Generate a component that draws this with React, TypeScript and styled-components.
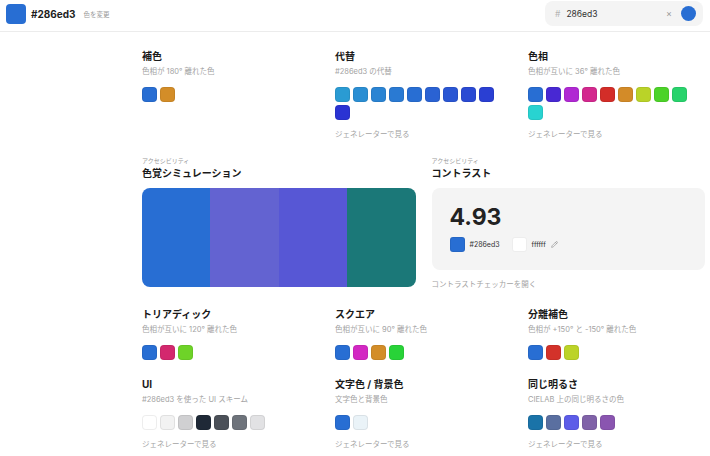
import styled, { createGlobalStyle } from 'styled-components';
import { Pencil } from 'lucide-react';

const GlobalStyle = createGlobalStyle`
    body {
        margin: 0;
        background: #ffffff;
        font-family: Inter, "Noto Sans CJK JP", sans-serif;
        color: #1a1a1a;
    }
`;

const Header = styled.header`
    height: 32px;
    box-sizing: border-box;
    border-bottom: 1px solid #ececec;
    display: flex;
    align-items: center;
    justify-content: space-between;
    padding: 0 7px 0 6px;
    .brand {
        display: flex;
        align-items: center;
        gap: 5px;
        margin-top: -4px;
    }
    .logo {
        width: 20px;
        height: 20px;
        border-radius: 4px;
        background: #286ed3;
    }
    .hex {
        font-size: 10px;
        font-weight: 700;
        color: #1d1d1d;
    }
    .change {
        font-size: 6.5px;
        color: #9a9a9a;
        margin-left: 3px;
    }
`;

const Search = styled.div`
    width: 158px;
    height: 25px;
    box-sizing: border-box;
    border-radius: 8px;
    background: #f4f4f4;
    display: flex;
    align-items: center;
    padding: 0 7px 0 10px;
    margin-top: -4px;
    font-size: 8.5px;
    .hash {
        color: #b5b5b5;
        margin-right: 6px;
    }
    .value {
        color: #333;
        flex: 1;
    }
    .clear {
        color: #9a9a9a;
        font-size: 9px;
        margin-right: 9px;
    }
    .dot {
        width: 15px;
        height: 15px;
        border-radius: 50%;
        background: #286ed3;
    }
`;

const Content = styled.main`
    width: 563px;
    margin-left: 142px;
    padding-top: 17px;
    display: grid;
    grid-template-columns: repeat(6, 1fr);
    column-gap: 16px;
    row-gap: 17px;
`;

const Section = styled.section<{ $span: number }>`
    grid-column: span ${(p) => p.$span};
    min-width: 0;
`;

const Label = styled.div`
    font-size: 6px;
    line-height: 8px;
    color: #9a9a9a;
    margin-bottom: 1px;
`;

const Title = styled.h3`
    margin: 0;
    font-size: 10px;
    line-height: 14px;
    font-weight: 700;
    color: #1a1a1a;
`;

const Sub = styled.p`
    margin: 4px 0 0;
    font-size: 7.5px;
    line-height: 10px;
    color: #a3a3a3;
`;

const Swatches = styled.div`
    margin-top: 10px;
    display: flex;
    flex-wrap: wrap;
    gap: 3px;
    max-width: 170px;
`;

const Swatch = styled.div<{ $c: string }>`
    width: 15px;
    height: 15px;
    border-radius: 4px;
    background: ${(p) => p.$c};
    box-shadow: inset 0 0 0 1px rgba(0, 0, 0, 0.07);
`;

const LinkText = styled.a`
    display: block;
    margin-top: 10px;
    font-size: 7.5px;
    line-height: 10px;
    color: #a3a3a3;
`;

const SimBar = styled.div`
    margin-top: 8px;
    height: 99px;
    border-radius: 8px;
    overflow: hidden;
    display: flex;
    div {
        flex: 1;
    }
`;

const ContrastBox = styled.div`
    margin-top: 8px;
    height: 82px;
    box-sizing: border-box;
    border-radius: 8px;
    background: #f4f4f4;
    padding: 14px 18px 0;
    .ratio {
        font-size: 23px;
        line-height: 30px;
        font-weight: 700;
        color: #222;
    }
    .pair {
        margin-top: 5px;
        display: flex;
        align-items: center;
        font-size: 7px;
        color: #333;
    }
    .pair span {
        margin: 0 12px 0 5px;
    }
    .pair span.last {
        margin-right: 5px;
    }
`;

const ContrastSwatch = styled(Swatch)`
    border-radius: 3px;
`;

type Card = {
    title: string;
    sub: string;
    colors: string[];
    link?: boolean;
};

const row1: Card[] = [
    { title: '補色', sub: '色相が 180° 離れた色', colors: ['#286ed3', '#d38d28'] },
    {
        title: '代替',
        sub: '#286ed3 の代替',
        colors: ['#2a9bd3', '#2a8ed3', '#2a84d3', '#2a7ad3', '#286ed3', '#2a62d3', '#2a56d3', '#2a4ad3', '#2a3fd3', '#2a33d3'],
        link: true
    },
    {
        title: '色相',
        sub: '色相が互いに 36° 離れた色',
        colors: ['#286ed3', '#4828d3', '#b028d3', '#d3288e', '#d32d28', '#d38b28', '#bad328', '#4cd328', '#28d36c', '#28d3d1'],
        link: true
    }
];

const row3: Card[] = [
    { title: 'トリアディック', sub: '色相が互いに 120° 離れた色', colors: ['#286ed3', '#d3286e', '#6ed328'] },
    { title: 'スクエア', sub: '色相が互いに 90° 離れた色', colors: ['#286ed3', '#d328c3', '#d38d28', '#28d338'] },
    { title: '分離補色', sub: '色相が +150° と -150° 離れた色', colors: ['#286ed3', '#d3322a', '#bcd328'] }
];

const row4: Card[] = [
    {
        title: 'UI',
        sub: '#286ed3 を使った UI スキーム',
        colors: ['#ffffff', '#f2f2f2', '#d0d0d2', '#1f2937', '#4b5058', '#6e737b', '#e2e2e4'],
        link: true
    },
    { title: '文字色 / 背景色', sub: '文字色と背景色', colors: ['#286ed3', '#eaf3f8'], link: true },
    {
        title: '同じ明るさ',
        sub: 'CIELAB 上の同じ明るさの色',
        colors: ['#1a73a8', '#5a6fa0', '#5c5ce8', '#8062a8', '#8a55b0'],
        link: true
    }
];

const CardView = ({ card }: { card: Card }) => (
    <Section $span={2}>
        <Title>{card.title}</Title>
        <Sub>{card.sub}</Sub>
        <Swatches>
            {card.colors.map((c, i) => (
                <Swatch key={i} $c={c} />
            ))}
        </Swatches>
        {card.link && <LinkText>ジェネレーターで見る</LinkText>}
    </Section>
);

export default () => {
    return (
        <>
            <GlobalStyle />
            <Header>
                <div className="brand">
                    <div className="logo" />
                    <span className="hex">#286ed3</span>
                    <span className="change">色を変更</span>
                </div>
                <Search>
                    <span className="hash">#</span>
                    <span className="value">286ed3</span>
                    <span className="clear">×</span>
                    <div className="dot" />
                </Search>
            </Header>
            <Content>
                {row1.map((c) => (
                    <CardView key={c.title} card={c} />
                ))}
                <Section $span={3}>
                    <Label>アクセシビリティ</Label>
                    <Title>色覚シミュレーション</Title>
                    <SimBar>
                        <div style={{ background: '#286ed3' }} />
                        <div style={{ background: '#6363d1' }} />
                        <div style={{ background: '#5757d5' }} />
                        <div style={{ background: '#1b7878' }} />
                    </SimBar>
                </Section>
                <Section $span={3}>
                    <Label>アクセシビリティ</Label>
                    <Title>コントラスト</Title>
                    <ContrastBox>
                        <div className="ratio">4.93</div>
                        <div className="pair">
                            <ContrastSwatch $c="#286ed3" />
                            <span>#286ed3</span>
                            <ContrastSwatch $c="#ffffff" />
                            <span className="last">ffffff</span>
                            <Pencil size={7} color="#888" />
                        </div>
                    </ContrastBox>
                    <LinkText>コントラストチェッカーを開く</LinkText>
                </Section>
                {row3.map((c) => (
                    <CardView key={c.title} card={c} />
                ))}
                {row4.map((c) => (
                    <CardView key={c.title} card={c} />
                ))}
            </Content>
        </>
    );
};
